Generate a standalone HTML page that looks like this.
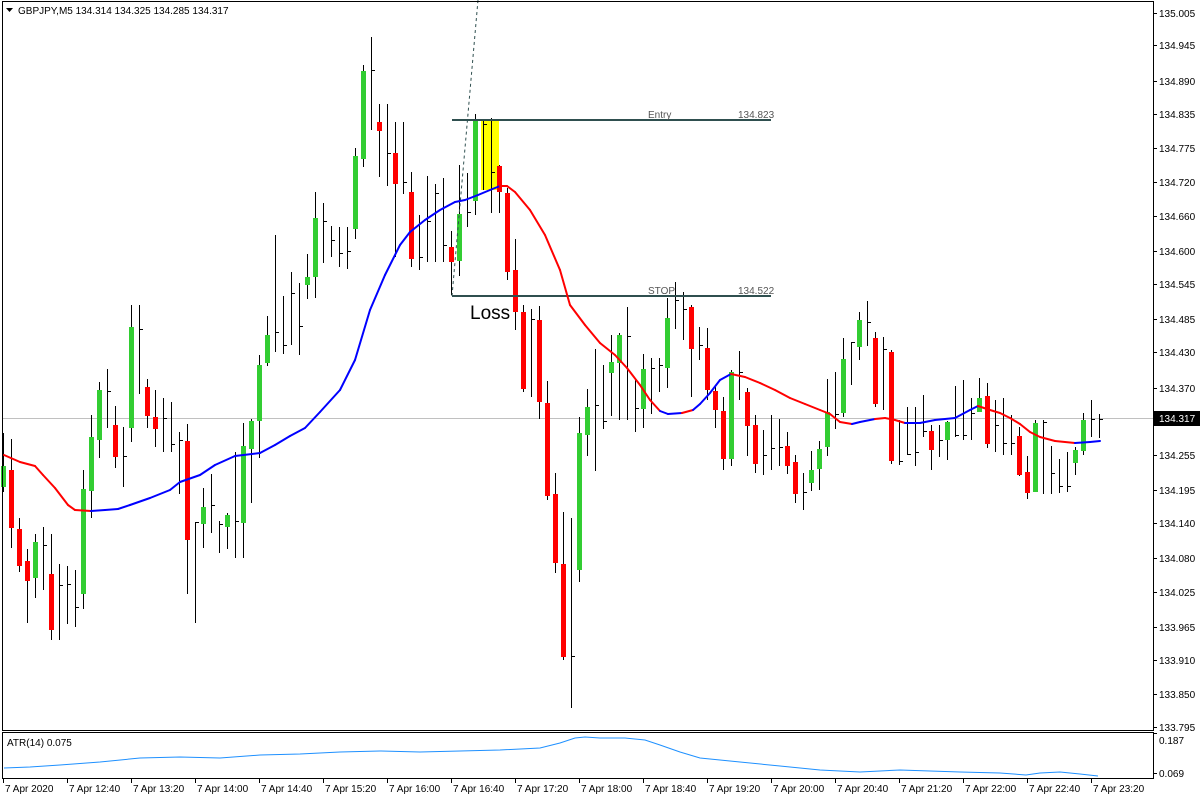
<!DOCTYPE html>
<html><head><meta charset="utf-8"><style>
html,body{margin:0;padding:0;background:#fff;width:1200px;height:800px;overflow:hidden}
svg{display:block;font-family:"Liberation Sans",sans-serif}
</style></head><body>
<svg id="c" width="1200" height="800" xmlns="http://www.w3.org/2000/svg">
<rect x="0" y="0" width="1200" height="800" fill="#fff"/>
<line x1="3" y1="418.5" x2="1153" y2="418.5" stroke="#c0c0c0" stroke-width="1"/>
<g id="cand"></g>
<rect x="481" y="120" width="18" height="70" fill="#ffff00"/>
<g id="cand2"></g>
<line x1="452" y1="296" x2="478" y2="0" stroke="#2f4f4f" stroke-width="1" stroke-dasharray="3,3"/>
<line x1="452" y1="120" x2="771" y2="120" stroke="#2f4f4f" stroke-width="2"/>
<line x1="452" y1="296" x2="771" y2="296" stroke="#2f4f4f" stroke-width="2"/>
<text x="648" y="118" font-size="10" fill="#555">Entry</text>
<text x="738" y="118" font-size="10" fill="#555">134.823</text>
<text x="648" y="294" font-size="10" fill="#555">STOP</text>
<text x="738" y="294" font-size="10" fill="#555">134.522</text>
<text x="470" y="319" font-size="19" fill="#000">Loss</text>
<g id="ma"></g>
<rect x="2.5" y="1.5" width="1151" height="729" fill="none" stroke="#000" stroke-width="1"/>
<rect x="2.5" y="732.5" width="1151" height="46" fill="none" stroke="#000" stroke-width="1"/>
<path d="M6 8 L13 8 L9.5 12 Z" fill="#000"/>
<text x="18" y="14" font-size="10" fill="#000">GBPJPY,M5  134.314 134.325 134.285 134.317</text>
<text x="7" y="746" font-size="10" fill="#000">ATR(14) 0.075</text>
<g id="axis" font-size="10" fill="#000"></g>
<polyline id="atr" fill="none" stroke="#1e90ff" stroke-width="1"/>
</svg>
<script>
var D=[
['g',466,487,433,492],['r',470,528,439,548],['r',529,566,518,572],['r',561,581,549,623],['g',542,578,534,598],
['d',545,527,590],['r',574,630,534,640],['d',585,564,640],['d',584,566,624],['d',607,570,627],
['g',489,594,470,609],['g',437,491,415,518],['g',390,440,382,458],['d',391,369,428],['r',425,457,406,468],
['d',456,427,487],['g',327,428,305,442],['d',329,305,394],['r',387,416,379,428],['r',417,429,390,447],
['d',418,398,452],['d',444,402,452],['d',440,432,494],['r',441,540,424,594],['d',522,522,623],
['g',507,524,488,548],['d',505,474,533],['d',524,521,553],['g',515,527,513,549],['d',521,452,558],
['g',446,523,423,558],['g',421,449,419,503],['g',365,421,355,458],['g',335,363,316,366],['d',332,235,352],
['d',345,296,354],['d',293,272,345],['d',326,283,355],['g',277,285,254,299],['g',218,277,192,298],
['d',221,203,263],['d',240,226,257],['d',253,227,267],['d',251,227,269],['g',156,229,148,239],
['g',71,159,65,167],['d',70,37,130],['r',122,131,104,177],['d',153,104,186],['r',153,184,122,257],
['d',182,122,194],['r',192,259,172,267],['d',257,215,270],['d',221,176,262],['d',193,184,262],
['d',245,178,262],['r',247,262,231,295],['g',214,261,165,276],['d',212,173,227],['g',121,201,114,215],
['d',124,120,190],['d',172,118,213],['r',166,192,165,213],['r',193,272,188,280],['r',270,312,239,330],
['r',312,389,305,392],['d',319,309,397],['r',320,402,306,419],['r',403,496,381,500],['r',494,563,473,573],
['r',564,657,512,660],['d',656,518,708],['g',433,570,417,582],['g',407,435,389,456],['d',405,349,471],
['d',421,365,429],['g',362,373,335,416],['g',335,363,333,420],['d',336,307,420],['d',408,379,432],
['g',369,409,354,428],['d',368,358,414],['d',365,358,392],['g',318,368,298,388],['d',300,282,329],
['d',309,292,340],['r',307,349,305,397],['d',345,327,360],['r',348,390,328,400],['r',391,410,387,428],
['r',411,459,397,470],['g',372,459,370,466],['d',372,351,400],['r',392,426,388,456],['r',425,464,415,473],
['d',455,430,475],['d',448,415,470],['d',447,419,466],['r',446,466,432,474],['r',462,494,455,503],
['d',492,473,510],['g',470,483,451,491],['g',449,469,441,490],['g',412,447,379,456],['d',414,372,429],
['g',359,413,338,417],['d',342,342,385],['g',320,347,312,360],['d',322,301,346],['r',338,404,332,407],
['d',349,337,410],['r',352,461,350,464],['d',461,420,465],['d',454,407,455],['d',452,407,466],
['d',431,395,437],['r',431,450,425,470],['d',440,425,457],['g',422,440,421,460],['d',435,386,437],
['d',435,380,440],['d',413,398,440],['g',398,412,378,412],['r',396,444,383,448],['d',425,400,452],
['d',443,398,455],['d',443,415,455],['r',436,475,427,476],['r',472,493,456,499],['g',423,492,420,492],
['d',422,420,494],['d',473,446,494],['d',486,459,493],['d',486,452,492],['g',450,463,447,475],
['g',420,451,413,455],['d',419,400,437],['d',419,414,438]];
var s1='',s2='';
for(var i=0;i<D.length;i++){var c=D[i],x=3+8*i,s='';
 if(c[0]=='d'){s+='<rect x="'+x+'" y="'+c[2]+'" width="1" height="'+(c[3]-c[2])+'" fill="#000"/>';
  s+='<rect x="'+(x+1)+'" y="'+c[1]+'" width="3" height="1" fill="#000"/>';}
 else{s+='<rect x="'+x+'" y="'+c[3]+'" width="1" height="'+(c[4]-c[3])+'" fill="#000"/>';
  s+='<rect x="'+(x-2)+'" y="'+c[1]+'" width="5" height="'+Math.max(1,c[2]-c[1])+'" fill="'+(c[0]=='g'?'#32cd32':'#ff0000')+'"/>';}
 if(x>=479&&x<=501)s2+=s;else s1+=s;}
document.getElementById('cand').innerHTML=s1;
document.getElementById('cand2').innerHTML=s2;
var M=[[4,455],[20,462],[35,466],[43,475],[55,488],[68,505],[75,510],[91,511],[105,510],[118,509],[130,505],[150,498],[170,490],[180,482],[200,475],[215,465],[235,456],[260,453],[275,445],[290,436],[305,428],[320,412],[340,390],[355,360],[370,310],[385,275],[400,245],[410,232],[425,220],[440,210],[455,202],[465,200],[478,195],[490,190],[500,186],[507,186],[515,192],[530,210],[545,235],[560,270],[570,305],[585,325],[600,343],[615,355],[627,368],[640,385],[650,400],[660,411],[668,414],[682,413],[693,410],[700,404],[710,393],[720,380],[731,374],[745,377],[760,383],[775,390],[790,398],[805,404],[820,410],[830,414],[840,422],[852,424],[860,422],[875,419],[885,418],[895,420],[905,423],[920,423],[935,420],[955,418],[970,410],[978,406],[990,410],[1000,413],[1010,418],[1020,424],[1030,432],[1040,437],[1055,441],[1075,443],[1090,442],[1100,441]];
var B=[[91,500],[660,682],[693,731],[852,875],[905,978],[1075,1100]];
function blue(x){for(var k=0;k<B.length;k++)if(x>=B[k][0]&&x<B[k][1])return true;return false;}
var m='';for(var i=0;i<M.length-1;i++){var a=M[i],b=M[i+1];
 m+='<line x1="'+a[0]+'" y1="'+a[1]+'" x2="'+b[0]+'" y2="'+b[1]+'" stroke="'+(blue(a[0])?'#0000ff':'#ff0000')+'" stroke-width="2" stroke-linecap="round"/>';}
document.getElementById('ma').innerHTML=m;
var L=[['135.005',13],['134.945',45],['134.890',81],['134.835',114],['134.775',148],['134.720',182],['134.660',216],['134.600',251],['134.545',284],['134.485',319],['134.430',352],['134.370',388],['134.255',455],['134.195',490],['134.140',523],['134.080',558],['134.025',592],['133.965',627],['133.910',660],['133.850',694],['133.795',727]];
var a='';for(var i=0;i<L.length;i++){a+='<rect x="1153" y="'+L[i][1]+'" width="4" height="1" fill="#000"/><text x="1159" y="'+(L[i][1]+4)+'">'+L[i][0]+'</text>';}
a+='<rect x="1154" y="411" width="46" height="15" fill="#000"/><text x="1159" y="422" fill="#fff">134.317</text>';
a+='<text x="1159" y="744">0.187</text><text x="1159" y="777">0.069</text>';
a+='<rect x="1153" y="733" width="4" height="1" fill="#000"/><rect x="1153" y="773" width="4" height="1" fill="#000"/>';
var T=['7 Apr 2020','7 Apr 12:40','7 Apr 13:20','7 Apr 14:00','7 Apr 14:40','7 Apr 15:20','7 Apr 16:00','7 Apr 16:40','7 Apr 17:20','7 Apr 18:00','7 Apr 18:40','7 Apr 19:20','7 Apr 20:00','7 Apr 20:40','7 Apr 21:20','7 Apr 22:00','7 Apr 22:40','7 Apr 23:20'];
for(var i=0;i<T.length;i++){var x=i==0?3:3+64*i;a+='<rect x="'+x+'" y="779" width="1" height="4" fill="#000"/><text x="'+(x+2)+'" y="792">'+T[i]+'</text>';}
document.getElementById('axis').innerHTML=a;
document.getElementById('atr').setAttribute('points','4,768 30,767 60,765 100,762 140,758 180,757 220,758 260,755 300,754 340,752 380,751 420,752 460,751 500,750 540,748 560,743 575,738 585,737 600,738 625,738 645,740 660,745 680,752 700,758 740,762 780,766 820,770 860,772 880,771 900,770 930,771 960,772 1000,773 1026,775 1040,773 1060,772 1080,774 1098,776');
</script>
</body></html>
